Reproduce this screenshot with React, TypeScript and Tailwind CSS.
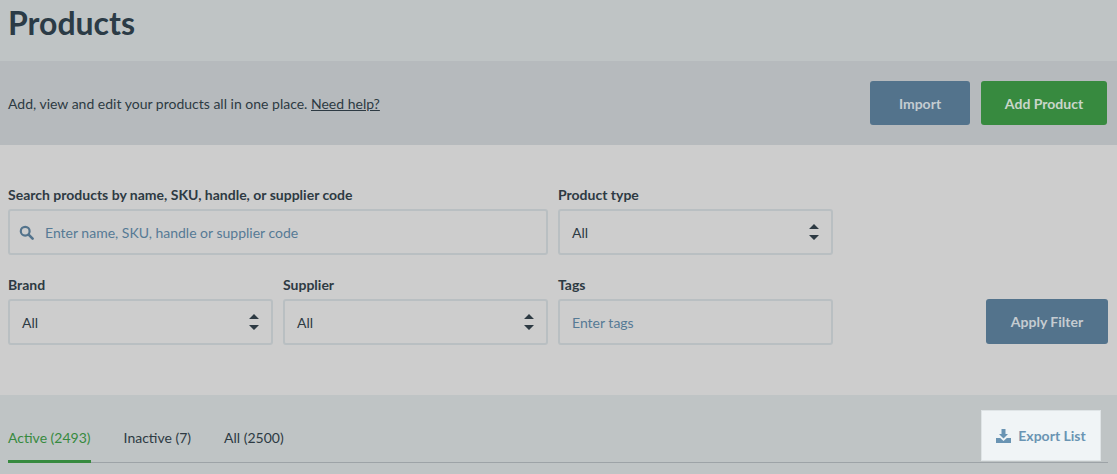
import React from "react";

const font = { fontFamily: "Lato, sans-serif" };

function Chevrons() {
  return (
    <svg width="12" height="18" viewBox="0 0 12 18" className="absolute right-[11px] top-[12px]">
      <path d="M6 1 L11 6 H1 Z M1 12 H11 L6 17 Z" fill="#2d3a43" />
    </svg>
  );
}

function Select({ label }: { label: string }) {
  return (
    <div className="flex flex-col">
      <label className="h-[20px] text-[14px] leading-[20px] font-bold text-[#2d3a43] mb-[4px]">{label}</label>
      <div className="relative h-[46px] border-2 border-[#b9bfc2] rounded-[3px] flex items-center pl-[12px] text-[14px] text-[#2d3a43]">
        All
        <Chevrons />
      </div>
    </div>
  );
}

export default function App() {
  return (
    <div className="w-[1117px] h-[474px] overflow-hidden bg-[#bfc4c5] text-[#2d3a43]" style={font}>
      <div className="h-[61px] pl-[8px]">
        <h1 className="text-[32px] leading-[46px] font-bold text-[#2b3b46]">Products</h1>
      </div>
      <div className="h-[84px] bg-[#b6babd] pl-[8px] pr-[10px] flex items-center justify-between">
        <p className="text-[14px]">
          Add, view and edit your products all in one place. <a className="underline">Need help?</a>
        </p>
        <div className="flex gap-[11px]">
          <button className="w-[100px] h-[44px] rounded-[3px] bg-[#53738c] text-[#c5ccd1] text-[14px] font-bold">Import</button>
          <button className="w-[126px] h-[44px] rounded-[3px] bg-[#378a3f] text-[#c9d6ca] text-[14px] font-bold">Add Product</button>
        </div>
      </div>
      <div className="h-[250px] bg-[#cdcdcd] pl-[8px] pr-[9px] pt-[40px]">
        <div className="grid grid-cols-[265px_265px_275px_1fr] gap-x-[10px] gap-y-[20px]">
          <div className="col-span-2 flex flex-col">
            <label className="h-[20px] text-[14px] leading-[20px] font-bold mb-[4px]">
              Search products by name, SKU, handle, or supplier code
            </label>
            <div className="h-[46px] border-2 border-[#b9bfc2] rounded-[3px] flex items-center pl-[9px] text-[14px] text-[#567a95]">
              <svg width="15" height="15" viewBox="0 0 15 15" className="mr-[11px]">
                <circle cx="6.2" cy="6.2" r="4.4" fill="none" stroke="#53738c" strokeWidth="2.2" />
                <path d="M9.6 9.6 L13.6 13.6" stroke="#53738c" strokeWidth="2.6" strokeLinecap="round" />
              </svg>
              Enter name, SKU, handle or supplier code
            </div>
          </div>
          <Select label="Product type" />
          <div />
          <Select label="Brand" />
          <Select label="Supplier" />
          <div className="flex flex-col">
            <label className="h-[20px] text-[14px] leading-[20px] font-bold mb-[4px]">Tags</label>
            <div className="h-[46px] border-2 border-[#b9bfc2] rounded-[3px] flex items-center pl-[12px] text-[14px] text-[#567a95]">
              Enter tags
            </div>
          </div>
          <div className="flex items-end justify-end">
            <button className="w-[122px] h-[45px] mb-[1px] rounded-[3px] bg-[#53738c] text-[#c5ccd1] text-[14px] font-bold">Apply Filter</button>
          </div>
        </div>
      </div>
      <div className="relative h-[79px] pl-[8px] pr-[9px] pt-[15px]">
        <div className="flex items-stretch h-[53px] border-b border-[#9da3a7]">
          <div className="flex gap-[33px] flex-1 text-[14px]">
            <span className="h-[53px] border-b-[3px] border-[#378a3f] text-[#378a3f] pt-[17px]">Active (2493)</span>
            <span className="pt-[17px]">Inactive (7)</span>
            <span className="pt-[17px]">All (2500)</span>
          </div>
        </div>
        <button className="absolute left-[981px] top-[15px] w-[120px] h-[51px] bg-[#f0f4f6] border border-[#dfe4e6] flex items-center justify-center gap-[7px] text-[14px] font-bold text-[#6a94b3]">
          <svg width="15" height="14" viewBox="0 0 15 14">
            <path d="M5.5 0 H9.5 V5 H12 L7.5 9.5 L3 5 H5.5 Z" fill="#6a94b3" />
            <path d="M0 9 H4.2 L7.5 12 L10.8 9 H15 V14 H0 Z" fill="#6a94b3" />
          </svg>
          Export List
        </button>
      </div>
    </div>
  );
}
